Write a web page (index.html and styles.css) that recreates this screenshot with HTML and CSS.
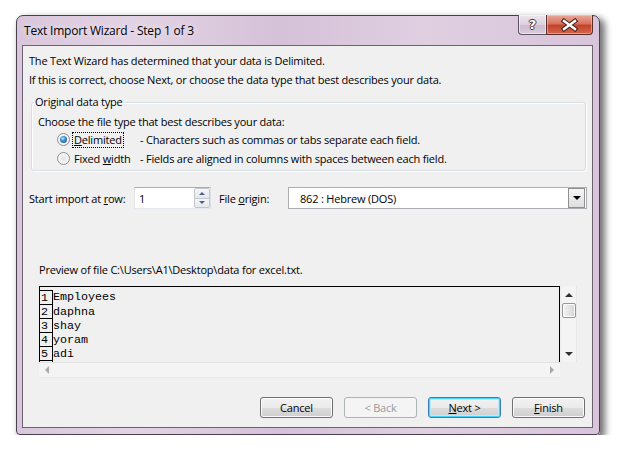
FILE: index.html
```html
<!DOCTYPE html>
<html>
<head>
<meta charset="utf-8">
<link rel="stylesheet" href="styles.css">
</head>
<body>
<div class="window">
  <div class="titlebar">
    <span class="title">Text Import Wizard - Step 1 of 3</span>
    <div class="caps">
      <div class="cap help"><span>?</span></div>
      <div class="cap close">
        <svg width="45" height="19" viewBox="0 0 45 19">
          <path d="M17 6 L28 14 M28 6 L17 14" stroke="#4a2420" stroke-width="4.6" stroke-linecap="square"/>
          <path d="M17 6 L28 14 M28 6 L17 14" stroke="#ffffff" stroke-width="2.4" stroke-linecap="square"/>
        </svg>
      </div>
    </div>
  </div>
  <div class="client">
    <p class="intro">The Text Wizard has determined that your data is Delimited.</p>
    <p class="intro">If this is correct, choose Next, or choose the data type that best describes your data.</p>
    <fieldset class="group">
      <legend>Original data type</legend>
      <div class="choose">Choose the file type that best describes your data:</div>
      <div class="opt">
        <span class="radio checked"></span>
        <span class="lbl"><span class="focus"><u>D</u>elimited</span></span>
        <span class="desc">- Characters such as commas or tabs separate each field.</span>
      </div>
      <div class="opt">
        <span class="radio"></span>
        <span class="lbl"><span class="nofocus">Fixed <u>w</u>idth</span></span>
        <span class="desc">- Fields are aligned in columns with spaces between each field.</span>
      </div>
    </fieldset>
    <div class="startrow">
      <span class="lab-start">Start import at <u>r</u>ow:</span>
      <div class="spin">
        <span class="spin-val">1</span>
        <div class="spin-btns">
          <div class="sb up"><i></i></div>
          <div class="sb down"><i></i></div>
        </div>
      </div>
      <span class="lab-origin">File <u>o</u>rigin:</span>
      <div class="combo">
        <span class="combo-val">862 : Hebrew (DOS)</span>
        <div class="drop"><i></i></div>
      </div>
    </div>
    <div class="preview-label">Preview of file C:\Users\A1\Desktop\data for excel.txt.</div>
    <div class="preview">
      <div class="pv-main">
        <div class="pv-grid">
          <div class="row first"><span class="num">1</span><span class="cell">Employees</span></div>
          <div class="row"><span class="num">2</span><span class="cell">daphna</span></div>
          <div class="row"><span class="num">3</span><span class="cell">shay</span></div>
          <div class="row"><span class="num">4</span><span class="cell">yoram</span></div>
          <div class="row"><span class="num">5</span><span class="cell">adi</span></div>
          <div class="row"><span class="num"></span><span class="cell"></span></div>
        </div>
        <div class="hscroll">
          <i class="arr-left"></i>
          <i class="arr-right"></i>
        </div>
      </div>
      <div class="vscroll">
        <i class="arr-up"></i>
        <div class="thumb"></div>
        <i class="arr-down"></i>
      </div>
    </div>
    <div class="buttons">
      <button class="btn">Cancel</button>
      <button class="btn disabled">&lt; Back</button>
      <button class="btn default"><u>N</u>ext &gt;</button>
      <button class="btn"><u>F</u>inish</button>
    </div>
  </div>
</div>
</body>
</html>
```
FILE: styles.css
```css
* { box-sizing: border-box; }
body {
  margin: 0;
  background: #ffffff;
  font-family: "Open Sans", "Noto Sans", sans-serif;
  font-size: 11px;
  letter-spacing: -0.2px;
  color: #000;
}
.window {
  margin: 15px 0 0 16px;
  width: 584px;
  height: 420px;
  border: 1px solid #47404c;
  border-radius: 7px 7px 4px 4px;
  background: linear-gradient(90deg, #d9c6dc 0%, #e2d3e4 20%, #d5c1d8 45%, #dfcfe1 70%, #d8c4db 100%);
  box-shadow: 4px 4px 7px 1px rgba(0,0,0,0.55);
  display: flex;
  flex-direction: column;
}
.titlebar {
  height: 29px;
  display: flex;
  align-items: center;
  padding-left: 7px;
}
.title {
  font-size: 12px;
  color: #000;
  text-shadow: 0 0 6px rgba(255,255,255,0.9);
}
.caps {
  margin-left: auto;
  align-self: flex-start;
  margin-top: -1px;
  margin-right: 6px;
  display: flex;
  height: 20px;
}
.cap {
  height: 20px;
  border: 1px solid #5e5462;
  border-top: none;
  display: flex;
  align-items: center;
  justify-content: center;
}
.help {
  width: 28px;
  border-right: none;
  border-radius: 0 0 0 4px;
  background: linear-gradient(#eee6ef 0%, #ddd1df 50%, #cdbdcf 51%, #d9cbdb 100%);
  box-shadow: inset 0 0 0 1px rgba(255,255,255,0.5);
}
.help span {
  font-family: "DejaVu Sans", sans-serif;
  font-weight: bold;
  font-size: 13px;
  color: #fff;
  line-height: 1;
  text-shadow: 1px 0 0 #3e3640, -1px 0 0 #3e3640, 0 1px 0 #3e3640, 0 -1px 0 #3e3640;
}
.close {
  width: 47px;
  border-radius: 0 0 4px 0;
  border-color: #5a2c26;
  background: linear-gradient(#e9a99b 0%, #d9735f 45%, #c4432b 55%, #d2674d 100%);
  box-shadow: inset 0 0 0 1px rgba(255,220,210,0.45);
}
.client {
  flex: 1;
  margin: 0 6px 6px 5px;
  border: 1px solid #6c6370;
  background: #f0f0f0;
  padding: 5px 6px 0 6px;
  display: flex;
  flex-direction: column;
}
.intro {
  margin: 0;
  line-height: 19px;
  white-space: nowrap;
}
.group {
  margin: 5px 0 0 2px;
  width: 555px;
  padding: 3px 0 2px 6px;
  border: 1px solid #d5dfe5;
  border-radius: 3px;
  box-shadow: inset 1px 1px 0 #fff, 1px 1px 0 #fff;
  min-width: 0;
}
.group legend {
  padding: 0 1px;
  margin-left: -4px;
  line-height: 16px;
}
.choose {
  line-height: 17px;
  white-space: nowrap;
}
.opt {
  display: flex;
  align-items: center;
  height: 19px;
  padding-left: 19px;
  white-space: nowrap;
}
.radio {
  width: 13px;
  height: 13px;
  border-radius: 50%;
  border: 1px solid #8b8d90;
  background: radial-gradient(circle at 50% 50%, #e2e2e2 0%, #f4f4f4 55%, #fbfbfb 100%);
  position: relative;
  margin-right: 2px;
  flex: none;
}
.radio.checked::after {
  content: "";
  position: absolute;
  left: 2px;
  top: 2px;
  width: 7px;
  height: 7px;
  border-radius: 50%;
  background: radial-gradient(circle at 40% 35%, #b8e6ff 0%, #3c8fd0 40%, #174e86 100%);
}
.lbl {
  width: 68px;
  flex: none;
}
.focus {
  border: 1px dotted #000;
  padding: 0 1px;
  display: inline-block;
  line-height: 14px;
}
.nofocus {
  padding: 0 2px;
  display: inline-block;
}
.startrow {
  margin-top: 16px;
  height: 22px;
  display: flex;
  align-items: center;
  white-space: nowrap;
}
.lab-start { width: 105px; flex: none; }
.spin {
  width: 77px;
  height: 22px;
  border: 1px solid #abadb3;
  border-color: #abadb3 #dbdfe6 #e3e9ef #e2e3ea;
  background: #fff;
  display: flex;
  align-items: center;
  padding-left: 4px;
  flex: none;
}
.spin-val { flex: 1; }
.spin-btns {
  width: 16px;
  height: 20px;
  display: flex;
  flex-direction: column;
}
.sb {
  flex: 1;
  border: 1px solid #c3c7cd;
  background: linear-gradient(#f4f6f8, #e4e8ec);
  display: flex;
  align-items: center;
  justify-content: center;
}
.sb.up { border-radius: 2px 2px 0 0; }
.sb.down { border-radius: 0 0 2px 2px; border-top: none; }
.sb i {
  width: 0; height: 0;
  border-left: 3px solid transparent;
  border-right: 3px solid transparent;
}
.sb.up i { border-bottom: 3px solid #4d6185; }
.sb.down i { border-top: 3px solid #4d6185; }
.lab-origin { width: 69px; margin-left: 8px; flex: none; }
.combo {
  width: 299px;
  height: 22px;
  border: 1px solid #abadb3;
  background: #fff;
  display: flex;
  align-items: center;
  padding-left: 11px;
  flex: none;
}
.combo-val { flex: 1; }
.drop {
  width: 17px;
  height: 20px;
  border: 1px solid #8f8f8f;
  background: linear-gradient(#f6f6f6, #dedede);
  display: flex;
  align-items: center;
  justify-content: center;
  margin-right: 1px;
}
.drop i {
  width: 0; height: 0;
  border-left: 4px solid transparent;
  border-right: 4px solid transparent;
  border-top: 4px solid #000;
}
.preview-label {
  margin: 53px 0 0 10px;
  line-height: 16px;
  white-space: nowrap;
}
.preview {
  margin: 8px 0 0 10px;
  width: 538px;
  height: 92px;
  display: flex;
}
.pv-main {
  width: 523px;
  display: flex;
  flex-direction: column;
}
.pv-grid {
  height: 76px;
  border: 1px solid #000;
  border-bottom: none;
  padding-top: 3px;
  overflow: hidden;
  font-family: "Liberation Mono", "Courier New", monospace;
  font-size: 11.7px;
  letter-spacing: 0;
}
.row {
  display: flex;
  height: 14px;
  line-height: 15px;
}
.num {
  width: 13px;
  flex: none;
  border-right: 1px solid #000;
  border-bottom: 1px solid #000;
  padding-left: 1px;
}
.row.first .num { border-top: 1px solid #000; }
.row.first { height: 15px; }
.cell { padding-left: 0; white-space: pre; }
.hscroll {
  height: 16px;
  background: #f4f4f4;
  border-top: 1px solid #e2e2e2;
  border-bottom: 1px solid #e6e6e6;
  display: flex;
  align-items: center;
  justify-content: space-between;
  padding: 0 6px 0 6px;
}
.arr-left {
  width: 0; height: 0;
  border-top: 4px solid transparent;
  border-bottom: 4px solid transparent;
  border-right: 4px solid #a9a9a9;
}
.arr-right {
  width: 0; height: 0;
  border-top: 4px solid transparent;
  border-bottom: 4px solid transparent;
  border-left: 4px solid #a9a9a9;
}
.vscroll {
  margin-left: 2px;
  width: 15px;
  height: 76px;
  background: #f4f4f4;
  border-right: 1px solid #e6e6e6;
  display: flex;
  flex-direction: column;
  align-items: center;
  padding-top: 7px;
}
.arr-up {
  width: 0; height: 0;
  border-left: 4px solid transparent;
  border-right: 4px solid transparent;
  border-bottom: 4px solid #303030;
}
.thumb {
  margin-top: 6px;
  width: 14px;
  height: 15px;
  border: 1px solid #959595;
  border-radius: 2px;
  background: linear-gradient(90deg, #f3f3f3, #e4e4e4 50%, #d6d6d6);
  box-shadow: inset 0 0 0 1px #fff;
}
.arr-down {
  margin-top: auto;
  margin-bottom: 6px;
  width: 0; height: 0;
  border-left: 4px solid transparent;
  border-right: 4px solid transparent;
  border-top: 4px solid #303030;
}
.buttons {
  margin-top: 19px;
  display: flex;
  justify-content: flex-end;
  gap: 11px;
  width: 556px;
}
.btn {
  width: 73px;
  height: 21px;
  font-family: inherit;
  font-size: 11px;
  letter-spacing: -0.2px;
  color: #000;
  border: 1px solid #707070;
  border-radius: 3px;
  background: linear-gradient(#f2f2f2 0%, #ebebeb 50%, #dddddd 51%, #cfcfcf 100%);
  box-shadow: inset 0 0 0 1px #fbfbfb;
  padding: 0;
}
.btn.disabled {
  border-color: #adb2b5;
  background: #f4f4f4;
  color: #9a9a9a;
  box-shadow: none;
}
.btn.default {
  border-color: #3c7fb1;
  box-shadow: inset 0 0 0 1px #48d1fb, inset 0 0 0 2px #bfe9f9;
}
```
